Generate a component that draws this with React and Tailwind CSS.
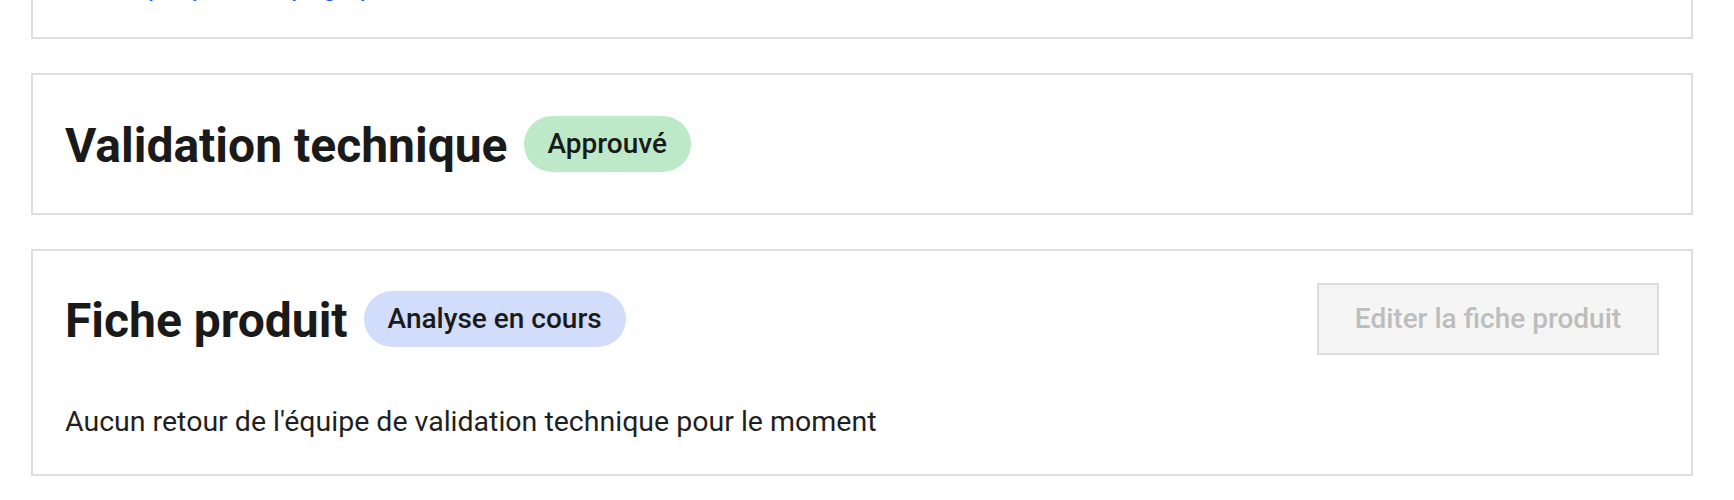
import React from "react";
import { ExternalLink } from "lucide-react";

const font = { fontFamily: "Roboto, 'Liberation Sans', sans-serif" };

const Badge = ({ children, tone }) => {
    const tones = {
        vert: "bg-[#bee9c9]",
        bleu: "bg-[#d2ddfb]",
    };

    return (
        <span className={`inline-flex items-center h-14 px-6 rounded-full text-[28px] font-medium text-[#1a1a1a] ${tones[tone]}`}>
            {children}
        </span>
    );
};

const App = () => {
    return (
        <div className="min-h-screen bg-white pl-[31px] pr-[41px] overflow-hidden" style={font}>
            <div className="flex flex-col gap-[34px] -mt-[69px]">
                {/* Carte précédente (coupée en haut) */}
                <div className="border-2 border-[#dddddd] px-8 pt-8 pb-[30px]">
                    <a className="flex items-center gap-3 text-[28px] leading-[42px] text-[#2356f6]">
                        <span>Voir l'aperçu de la page produit sur le site web</span>
                        <ExternalLink size={30} strokeWidth={2.5} />
                    </a>
                </div>

                {/* Validation technique */}
                <div className="border-2 border-[#dddddd] px-8 py-8">
                    <div className="flex items-center gap-4 h-[74px]">
                        <h2 className="text-[48px] font-bold text-[#1a1a1a] leading-none pt-1">
                            Validation technique
                        </h2>
                        <Badge tone="vert">Approuvé</Badge>
                    </div>
                </div>

                {/* Fiche produit */}
                <div className="border-2 border-[#dddddd] px-8 pt-8 pb-[31px]">
                    <div className="flex items-center justify-between h-[72px]">
                        <div className="flex items-center gap-4">
                            <h2 className="text-[48px] font-bold text-[#1a1a1a] leading-none pt-1">
                                Fiche produit
                            </h2>
                            <Badge tone="bleu">Analyse en cours</Badge>
                        </div>
                        <button
                            disabled
                            className="w-[342px] h-[72px] flex items-center justify-center border-2 border-[#dddddd] bg-[#f5f5f5] text-[28px] font-medium text-[#bdbdbd]"
                        >
                            Editer la fiche produit
                        </button>
                    </div>
                    <p className="mt-[46px] text-[28.5px] leading-[42px] text-[#1f1f1f]">
                        Aucun retour de l'équipe de validation technique pour le moment
                    </p>
                </div>
            </div>
        </div>
    );
};

export default App;
